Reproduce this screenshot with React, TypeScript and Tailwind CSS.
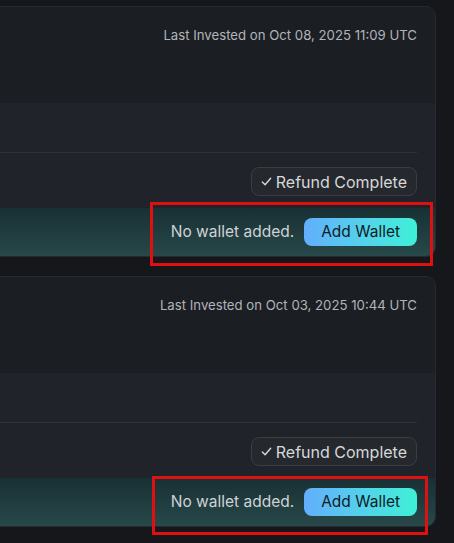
import React from "react"

type Entry = {
  invested: string
}

const entries: Entry[] = [
  { invested: "Last Invested on Oct 08, 2025 11:09 UTC" },
  { invested: "Last Invested on Oct 03, 2025 10:44 UTC" },
]

function InvestmentCard({ entry }: { entry: Entry }) {
  return (
    <div className="-ml-4 w-[452px] rounded-[10px] border border-[#262a2f] overflow-hidden bg-[#1b1e23]">
      <div className="h-[96px] pt-[19px] pr-[18px] flex justify-end">
        <span className="text-[13.2px] leading-[18px] text-[#b1b5ba]">{entry.invested}</span>
      </div>
      <div className="h-[105px] bg-[#202329]">
        <div className="h-[50px] mr-[18px] border-b border-[#2e3238]" />
        <div className="pt-[14px] pr-[18px] flex justify-end">
          <span className="h-[29px] pl-[8px] pr-[9px] flex items-center gap-[3px] rounded-[8px] border border-[#3a3e44] bg-[#25292e] text-[16px] text-[#d5d7da]">
            <svg width="13" height="13" viewBox="0 0 14 14" fill="none">
              <path d="M2.5 7.5 L5.5 10.5 L11.5 3.5" stroke="#d5d7da" strokeWidth="1.5" strokeLinecap="round" strokeLinejoin="round" />
            </svg>
            Refund Complete
          </span>
        </div>
      </div>
      <div className="h-[48px] pr-[18px] flex items-center justify-end gap-[10px] bg-gradient-to-b from-[#183035] to-[#284849]">
        <span className="text-[15.5px] text-[#cfd3d5]">No wallet added.</span>
        <button className="h-[28px] px-[17px] rounded-[8px] bg-gradient-to-r from-[#62aefc] to-[#3ef0d6] text-[15.5px] text-[#0e1b24]">
          Add Wallet
        </button>
      </div>
    </div>
  )
}

export default function App() {
  return (
    <div
      className="relative w-[454px] h-[543px] overflow-hidden bg-[#15171b]"
      style={{ fontFamily: "Inter, 'Noto Sans', sans-serif" }}
    >
      <div className="pt-[6px] flex flex-col gap-[19px]">
        {entries.map((e, i) => (
          <InvestmentCard key={i} entry={e} />
        ))}
      </div>
      <div className="absolute left-[150px] top-[202px] w-[283px] h-[64px] border-[3px] border-[#e01010]" />
      <div className="absolute left-[152px] top-[476px] w-[276px] h-[59px] border-[3px] border-[#e01010]" />
    </div>
  )
}
